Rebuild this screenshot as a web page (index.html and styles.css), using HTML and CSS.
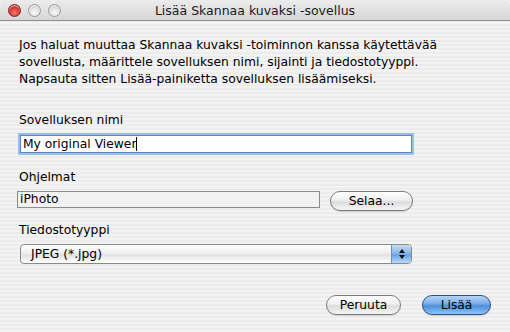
FILE: index.html
```html
<!DOCTYPE html>
<html lang="fi">
<head>
    <meta charset="UTF-8">
    <title>Lisää Skannaa kuvaksi -sovellus</title>
    <link rel="stylesheet" href="styles.css">
</head>
<body>
    <div class="window">
        <header class="titlebar">
            <div class="lights">
                <span class="light close"></span>
                <span class="light"></span>
                <span class="light"></span>
            </div>
            <div class="title">Lisää Skannaa kuvaksi -sovellus</div>
        </header>

        <main class="content">
            <p class="intro">Jos haluat muuttaa Skannaa kuvaksi -toiminnon kanssa käytettävää sovellusta, määrittele sovelluksen nimi, sijainti ja tiedostotyyppi. Napsauta sitten Lisää-painiketta sovelluksen lisäämiseksi.</p>

            <div class="label label-name">Sovelluksen nimi</div>
            <div class="text-field focused">My original Viewer<span class="caret"></span></div>

            <div class="label label-app">Ohjelmat</div>
            <div class="app-row">
                <div class="path-field">iPhoto</div>
                <button class="aqua-button browse">Selaa...</button>
            </div>

            <div class="label label-type">Tiedostotyyppi</div>
            <div class="popup">
                <span class="popup-value">JPEG (*.jpg)</span>
                <span class="popup-arrows">
                    <svg width="8" height="12" viewBox="0 0 8 12">
                        <path d="M4 1 L7 5 L1 5 Z" fill="#111"/>
                        <path d="M4 11 L7 7 L1 7 Z" fill="#111"/>
                    </svg>
                </span>
            </div>

            <div class="actions">
                <button class="aqua-button cancel">Peruuta</button>
                <button class="aqua-button default">Lisää</button>
            </div>
        </main>
    </div>
</body>
</html>
```

FILE: styles.css
```css
* {
    margin: 0;
    padding: 0;
    box-sizing: border-box;
}

body {
    width: 510px;
    height: 332px;
    overflow: hidden;
    font-family: 'DejaVu Sans', 'Liberation Sans', sans-serif;
    font-size: 12.3px;
    color: #000;
    background: #eeeeee;
}

.window {
    width: 510px;
    height: 332px;
    display: flex;
    flex-direction: column;
    background: repeating-linear-gradient(to bottom, #ececec 0, #ececec 2px, #f3f3f3 2px, #f3f3f3 4px);
}

/* Title bar */
.titlebar {
    height: 21px;
    display: flex;
    align-items: center;
    position: relative;
    background: linear-gradient(to bottom, #ececec, #d6d6d6);
    border-bottom: 1px solid #8e8e8e;
    border-top-right-radius: 6px;
    border-top-left-radius: 6px;
}

.lights {
    display: flex;
    gap: 7px;
    padding-left: 8px;
}

.light {
    width: 13px;
    height: 13px;
    border-radius: 50%;
    border: 1px solid #9a9a9a;
    background: radial-gradient(circle at 50% 70%, #fafafa 0, #e4e4e4 45%, #b8b8b8 100%);
    box-shadow: inset 0 1px 1px rgba(255,255,255,0.8);
}

.light.close {
    border-color: #7a1c1a;
    background: radial-gradient(circle at 50% 70%, #f07a6e 0, #d83a33 50%, #8e1a16 100%);
}

.title {
    position: absolute;
    left: 0;
    right: 0;
    text-align: center;
    font-size: 12.5px;
    color: #1a1a1a;
    pointer-events: none;
}

/* Content */
.content {
    padding: 0 18px 0 19px;
    display: flex;
    flex-direction: column;
}

.intro {
    margin-top: 16px;
    line-height: 17px;
    width: 440px;
}

.label {
    line-height: 17px;
}

.label-name {
    margin-top: 24px;
}

.label-app {
    margin-top: 16px;
}

.label-type {
    margin-top: 11px;
}

.text-field {
    margin: 6px 0 0 0;
    width: 392px;
    height: 18px;
    margin-left: 1px;
    padding-left: 2px;
    line-height: 16px;
    background: #fff;
    border: 1px solid #5d87bf;
    box-shadow: 0 0 0 2px #9dbde3;
    position: relative;
}

.caret {
    display: inline-block;
    width: 1px;
    height: 14px;
    background: #000;
    vertical-align: -3px;
}

.app-row {
    margin-top: 5px;
    display: flex;
    align-items: flex-start;
    margin-left: -2px;
}

.path-field {
    width: 303px;
    height: 17px;
    padding-left: 2px;
    line-height: 15px;
    background: #f2f2f2;
    border: 1px solid #8c8c8c;
}

.aqua-button {
    font-family: inherit;
    font-size: 12.3px;
    height: 20px;
    border-radius: 10px;
    border: 1px solid #7c7c7c;
    background: linear-gradient(to bottom, #ffffff 0%, #f0f0f0 45%, #dcdcdc 55%, #f6f6f6 100%);
    color: #000;
    box-shadow: 0 1px 1px rgba(0,0,0,0.15);
}

.browse {
    width: 83px;
    margin-left: 10px;
}

.popup {
    margin-top: 5px;
    margin-left: 1px;
    width: 392px;
    height: 20px;
    display: flex;
    border: 1px solid #8a8a8a;
    border-radius: 4px;
    overflow: hidden;
    background: linear-gradient(to bottom, #ffffff 0%, #eeeeee 45%, #e2e2e2 55%, #ffffff 100%);
}

.popup-value {
    flex: 1;
    padding-left: 10px;
    line-height: 18px;
}

.popup-arrows {
    width: 20px;
    display: flex;
    align-items: center;
    justify-content: center;
    border-left: 1px solid #6f8fb8;
    background: linear-gradient(to bottom, #c6dcf5 0%, #8db6e6 45%, #6aa2e2 55%, #b9dafb 100%);
}

.actions {
    margin-top: 31px;
    display: flex;
    justify-content: flex-end;
    gap: 21px;
    padding-right: 1px;
}

.cancel {
    width: 75px;
}

.default {
    width: 69px;
    border-color: #2f4f82;
    background: linear-gradient(to bottom, #b6d4f6 0%, #7fb0ea 40%, #4e8fdc 55%, #8cc4fa 100%);
}
```
